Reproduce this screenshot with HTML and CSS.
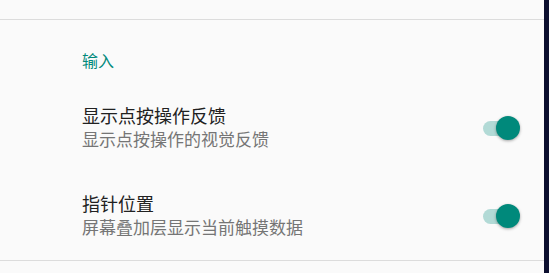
FILE: index.html
```html
<!DOCTYPE html>
<html lang="zh-CN">
<head>
<meta charset="utf-8">
<link rel="stylesheet" href="styles.css">
</head>
<body>
<div class="frame">
  <div class="screen">
    <div class="top-gap"></div>
    <div class="divider"></div>
    <div class="category">输入</div>
    <div class="pref">
      <div class="pref-text">
        <div class="pref-title">显示点按操作反馈</div>
        <div class="pref-summary">显示点按操作的视觉反馈</div>
      </div>
      <div class="switch"><span class="track"></span><span class="thumb"></span></div>
    </div>
    <div class="pref">
      <div class="pref-text">
        <div class="pref-title">指针位置</div>
        <div class="pref-summary">屏幕叠加层显示当前触摸数据</div>
      </div>
      <div class="switch"><span class="track"></span><span class="thumb"></span></div>
    </div>
    <div class="divider"></div>
  </div>
  <div class="edge"></div>
</div>
</body>
</html>
```
FILE: styles.css
```css
html, body {
  margin: 0;
  padding: 0;
  background: #fafafa;
}
body {
  font-family: "Noto Sans CJK SC", "Noto Sans", sans-serif;
  overflow: hidden;
}
.frame {
  display: flex;
  width: 549px;
  height: 273px;
}
.screen {
  width: 544px;
  background: #fafafa;
  display: flex;
  flex-direction: column;
}
.edge {
  width: 5px;
  background: #0c0f2f;
}
.top-gap {
  height: 19px;
}
.divider {
  height: 1px;
  background: #dcdcdc;
}
.category {
  height: 64px;
  box-sizing: border-box;
  padding-left: 82px;
  padding-top: 29px;
  font-size: 16px;
  line-height: 22px;
  color: #00897b;
}
.pref {
  height: 88px;
  display: flex;
  align-items: center;
  padding-left: 82px;
  padding-right: 24px;
}
.pref-text {
  flex: 1;
  display: flex;
  flex-direction: column;
  padding-bottom: 3px;
}
.pref-title {
  font-size: 18px;
  line-height: 24px;
  color: #212121;
}
.pref-summary {
  font-size: 17px;
  line-height: 23px;
  color: #757575;
}
.switch {
  position: relative;
  width: 38px;
  height: 24px;
}
.track {
  position: absolute;
  left: 1px;
  top: 5px;
  width: 32px;
  height: 15px;
  border-radius: 8px;
  background: #b2dad6;
}
.thumb {
  position: absolute;
  right: 0;
  top: 0;
  width: 24px;
  height: 24px;
  border-radius: 50%;
  background: #00897b;
  box-shadow: 0 1px 3px rgba(0, 0, 0, 0.35);
}
```
